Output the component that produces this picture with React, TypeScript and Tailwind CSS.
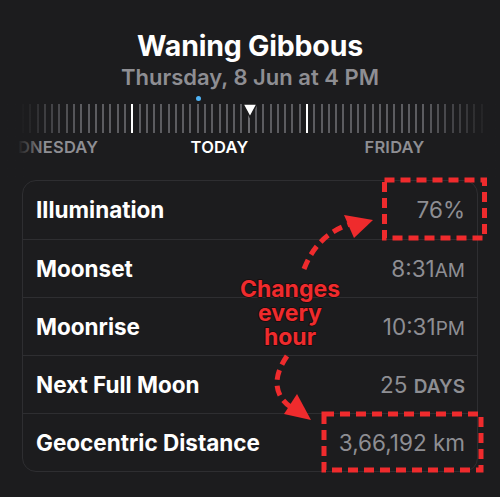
import React from "react";

const TICKS = 64;
const MAJOR = [15, 39];
const NOW = 31;

const rows = [
  { label: "Illumination", value: <>76%</> },
  {
    label: "Moonset",
    value: (
      <>
        8:31<span className="text-[19px]">AM</span>
      </>
    ),
  },
  {
    label: "Moonrise",
    value: (
      <>
        10:31<span className="text-[19px]">PM</span>
      </>
    ),
  },
  {
    label: "Next Full Moon",
    value: (
      <>
        25 <span className="text-[19px] font-semibold">DAYS</span>
      </>
    ),
  },
  { label: "Geocentric Distance", value: <>3,66,192 km</> },
];

const tickOpacity = (i: number) => {
  const edge = Math.min(i, TICKS - 1 - i);
  return edge >= 8 ? 1 : 0.25 + (edge / 8) * 0.75;
};

const Timeline = () => (
  <div className="relative h-[76px] mt-[14px]">
    <div className="absolute left-[22px] top-0 w-[461px] h-[29px] flex justify-between">
      {Array.from({ length: TICKS }).map((_, i) => (
        <div
          key={i}
          className={
            MAJOR.includes(i)
              ? "w-[2px] h-full bg-white"
              : i === NOW
                ? "w-[2px] h-full bg-[#6a6a6e]"
                : "w-[2px] h-full bg-[#5c5c60]"
          }
          style={{ opacity: MAJOR.includes(i) ? 1 : tickOpacity(i) }}
        />
      ))}
    </div>
    {/* now marker */}
    <svg
      className="absolute left-[242px] top-[-1px]"
      width="16"
      height="15"
      viewBox="0 0 16 15"
    >
      <path d="M1 1 H15 L8 14 Z" fill="white" stroke="#1c1c1e" strokeWidth="1.5" />
    </svg>
    <div className="absolute left-[196px] top-[-8px] w-[5px] h-[5px] rounded-full bg-[#4fb3f5]" />
    <div className="absolute top-[33px] left-[-43px] flex text-[16.5px] leading-[20px] font-semibold tracking-[0.2px]">
      <div className="w-[175px] text-center text-[#8e8e93]">WEDNESDAY</div>
      <div className="w-[175px] text-center text-white">TODAY</div>
      <div className="w-[175px] text-center text-[#8e8e93]">FRIDAY</div>
    </div>
    <div className="absolute left-0 top-0 w-[44px] h-full bg-gradient-to-r from-[#1c1c1e] from-40% to-transparent" />
    <div className="absolute right-0 top-0 w-[30px] h-full bg-gradient-to-l from-[#1c1c1e] to-transparent" />
  </div>
);

const Annotations = () => (
  <svg className="absolute inset-0 pointer-events-none" width="500" height="497">
    <g fill="none" stroke="#ef2b2d" strokeWidth="5" strokeDasharray="10 6">
      <rect x="384.5" y="180" width="100" height="58" />
      <rect x="324" y="414" width="157" height="56" />
      <path d="M304 269 C312 248 326 232 350 224" />
      <path d="M287 356 C272 378 274 396 292 408" />
    </g>
    <path d="M373 220 L344 215 L354 238 Z" fill="#ef2b2d" />
    <path d="M311 420 L284 414 L297 394 Z" fill="#ef2b2d" />
    <g
      textAnchor="middle"
      fill="#ef2b2d"
      stroke="#1a0a0a"
      strokeWidth="1.5"
      paintOrder="stroke"
      fontFamily="Inter, 'Liberation Sans', sans-serif"
      fontWeight="700"
      fontSize="23"
    >
      <text x="290" y="297">Changes</text>
      <text x="290" y="321">every</text>
      <text x="290" y="345">hour</text>
    </g>
  </svg>
);

export default function App() {
  return (
    <div
      className="relative w-[500px] h-[497px] overflow-hidden bg-[#1c1c1e] text-white"
      style={{ fontFamily: "Inter, 'Liberation Sans', sans-serif" }}
    >
      <div className="pt-[30px] flex flex-col items-center">
        <h1 className="text-[28.5px] font-bold leading-[32px] tracking-[-0.2px]">Waning Gibbous</h1>
        <p className="text-[22px] font-semibold leading-[26px] text-[#8e8e93] mt-[2px]">
          Thursday, 8 Jun at 4 PM
        </p>
      </div>
      <Timeline />
      <div className="mx-[22px] rounded-[14px] border border-[#2e2e31] bg-[#1c1c1e]">
        {rows.map((r, i) => (
          <div
            key={r.label}
            className={
              "h-[58px] flex items-center justify-between pl-[13px] pr-[12px] " +
              (i > 0 ? "border-t border-[#2e2e31]" : "")
            }
          >
            <span className="text-[22.5px] font-bold">{r.label}</span>
            <span className="text-[22.5px] text-[#8e8e93]">{r.value}</span>
          </div>
        ))}
      </div>
      <Annotations />
    </div>
  );
}
